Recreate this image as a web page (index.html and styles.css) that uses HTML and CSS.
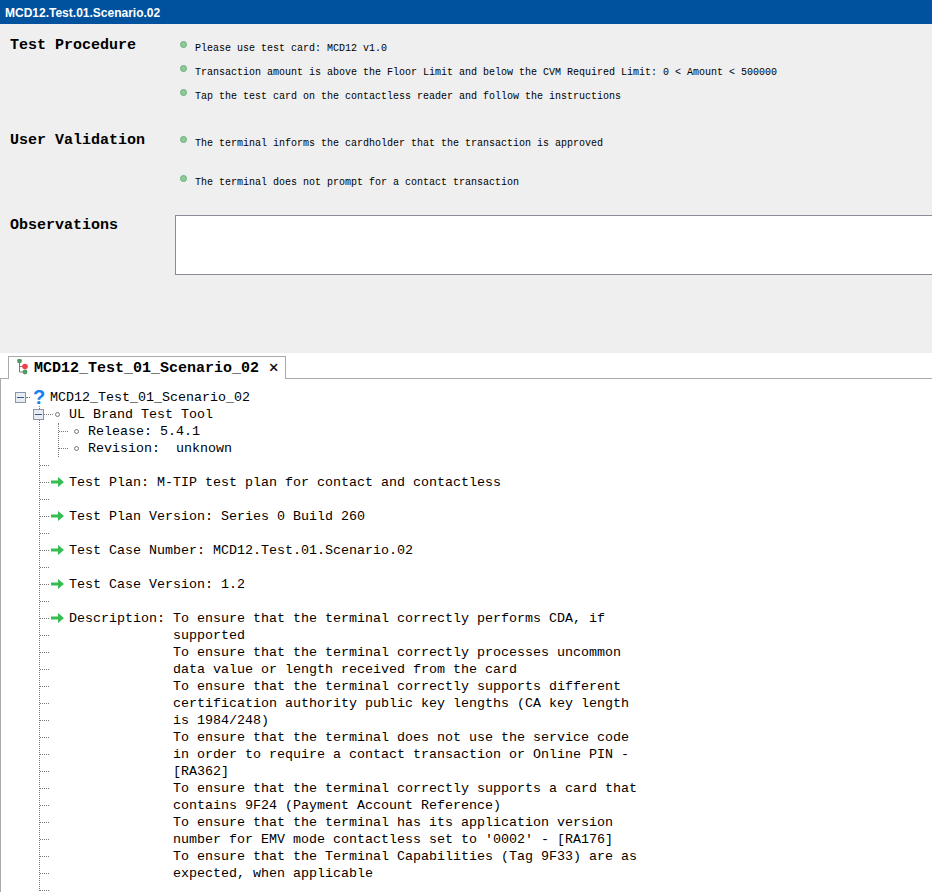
FILE: index.html
```html
<!DOCTYPE html>
<html lang="en">
<head>
  <meta charset="UTF-8">
  <title>MCD12.Test.01.Scenario.02</title>
  <link rel="stylesheet" href="styles.css">
</head>
<body>
  <div class="title-bar">MCD12.Test.01.Scenario.02</div>

  <div class="panel">
    <section class="section procedure">
      <h2 class="section-title">Test Procedure</h2>
      <ul class="steps">
        <li>Please use test card: MCD12 v1.0</li>
        <li>Transaction amount is above the Floor Limit and below the CVM Required Limit: 0 &lt; Amount &lt; 500000</li>
        <li>Tap the test card on the contactless reader and follow the instructions</li>
      </ul>
    </section>
    <section class="section validation">
      <h2 class="section-title">User Validation</h2>
      <ul class="steps steps-wide">
        <li>The terminal informs the cardholder that the transaction is approved</li>
        <li>The terminal does not prompt for a contact transaction</li>
      </ul>
    </section>
    <section class="section observations">
      <h2 class="section-title">Observations</h2>
      <textarea class="notes"></textarea>
    </section>
  </div>

  <div class="tab-strip">
    <div class="tab">
      <svg class="tab-icon" width="14" height="18" viewBox="0 0 14 18">
        <path d="M2.5 2V13H8M2.5 7.5H8" fill="none" stroke="#777" stroke-width="1"/>
        <circle cx="2.5" cy="2" r="2.4" fill="#4f9a5f"/>
        <circle cx="8" cy="7.5" r="2.8" fill="#f2404a"/>
        <circle cx="8" cy="13" r="2.4" fill="#4f9a5f"/>
      </svg>
      <span class="tab-label">MCD12_Test_01_Scenario_02</span>
      <span class="tab-close">×</span>
    </div>
  </div>

  <div class="tree">
    <div class="row root">
      <span class="toggle"></span>
      <span class="stub stub-root"></span>
      <span class="question">?</span>
      <span class="text">MCD12_Test_01_Scenario_02</span>
    </div>
    <div class="branch">
      <div class="row tool">
        <span class="toggle"></span>
        <span class="stub"></span>
        <span class="ring"></span>
        <span class="text">UL Brand Test Tool</span>
      </div>
      <div class="subbranch">
        <div class="row"><span class="stub"></span><span class="ring"></span><span class="text">Release: 5.4.1</span></div>
        <div class="row"><span class="stub"></span><span class="ring"></span><span class="text">Revision:  unknown</span></div>
      </div>
      <div class="row"><span class="stub"></span></div>

      <div class="row"><span class="stub"></span><svg class="arrow" width="13" height="10" viewBox="0 0 13 10"><path d="M0 3.5H7V0L13 5L7 10V6.5H0Z" fill="#35bd4f"/></svg><span class="text">Test Plan: M-TIP test plan for contact and contactless</span></div>
      <div class="row"><span class="stub"></span></div>

      <div class="row"><span class="stub"></span><svg class="arrow" width="13" height="10" viewBox="0 0 13 10"><path d="M0 3.5H7V0L13 5L7 10V6.5H0Z" fill="#35bd4f"/></svg><span class="text">Test Plan Version: Series 0 Build 260</span></div>
      <div class="row"><span class="stub"></span></div>

      <div class="row"><span class="stub"></span><svg class="arrow" width="13" height="10" viewBox="0 0 13 10"><path d="M0 3.5H7V0L13 5L7 10V6.5H0Z" fill="#35bd4f"/></svg><span class="text">Test Case Number: MCD12.Test.01.Scenario.02</span></div>
      <div class="row"><span class="stub"></span></div>

      <div class="row"><span class="stub"></span><svg class="arrow" width="13" height="10" viewBox="0 0 13 10"><path d="M0 3.5H7V0L13 5L7 10V6.5H0Z" fill="#35bd4f"/></svg><span class="text">Test Case Version: 1.2</span></div>
      <div class="row"><span class="stub"></span></div>

      <div class="row"><span class="stub"></span><svg class="arrow" width="13" height="10" viewBox="0 0 13 10"><path d="M0 3.5H7V0L13 5L7 10V6.5H0Z" fill="#35bd4f"/></svg><span class="text">Description: To ensure that the terminal correctly performs CDA, if</span></div>
      <div class="row"><span class="stub stub-line"></span><span class="text">supported</span></div>
      <div class="row"><span class="stub stub-line"></span><span class="text">To ensure that the terminal correctly processes uncommon</span></div>
      <div class="row"><span class="stub stub-line"></span><span class="text">data value or length received from the card</span></div>
      <div class="row"><span class="stub stub-line"></span><span class="text">To ensure that the terminal correctly supports different</span></div>
      <div class="row"><span class="stub stub-line"></span><span class="text">certification authority public key lengths (CA key length</span></div>
      <div class="row"><span class="stub stub-line"></span><span class="text">is 1984/248)</span></div>
      <div class="row"><span class="stub stub-line"></span><span class="text">To ensure that the terminal does not use the service code</span></div>
      <div class="row"><span class="stub stub-line"></span><span class="text">in order to require a contact transaction or Online PIN -</span></div>
      <div class="row"><span class="stub stub-line"></span><span class="text">[RA362]</span></div>
      <div class="row"><span class="stub stub-line"></span><span class="text">To ensure that the terminal correctly supports a card that</span></div>
      <div class="row"><span class="stub stub-line"></span><span class="text">contains 9F24 (Payment Account Reference)</span></div>
      <div class="row"><span class="stub stub-line"></span><span class="text">To ensure that the terminal has its application version</span></div>
      <div class="row"><span class="stub stub-line"></span><span class="text">number for EMV mode contactless set to '0002' - [RA176]</span></div>
      <div class="row"><span class="stub stub-line"></span><span class="text">To ensure that the Terminal Capabilities (Tag 9F33) are as</span></div>
      <div class="row"><span class="stub stub-line"></span><span class="text">expected, when applicable</span></div>
      <div class="row"><span class="stub"></span></div>
    </div>
  </div>
</body>
</html>
```

FILE: styles.css
```css
html, body {
  height: 892px;
  margin: 0;
  overflow: hidden;
  background-color: #fff;
}

body {
  font-family: "Liberation Mono", monospace;
  color: #000;
}

.title-bar {
  height: 24px;
  padding-left: 5px;
  background-color: #00529f;
  color: #fff;
  font: bold 12px/26px "Liberation Sans", sans-serif;
}

.panel {
  height: 329px;
  background-color: #efefef;
  overflow: hidden;
}

.section {
  display: flex;
}

.section-title {
  flex: none;
  width: 165px;
  margin: 1px 0 0 10px;
  font-size: 15px;
  font-weight: bold;
  line-height: 17px;
}

.procedure {
  padding-top: 12px;
  height: 95px;
}

.validation {
  height: 84px;
}

.observations {
  height: 60px;
}

.observations .section-title {
  margin-top: 2px;
}

.steps {
  margin: 0;
  padding: 0;
  list-style: none;
  font-size: 10px;
}

.steps li {
  position: relative;
  height: 24px;
  padding-left: 20px;
  line-height: 25px;
  white-space: nowrap;
}

.steps li::before {
  content: "";
  position: absolute;
  left: 5px;
  top: 5px;
  box-sizing: border-box;
  width: 7px;
  height: 7px;
  border: 1px solid #6fae7b;
  border-radius: 50%;
  background-color: #8ccb96;
}

.steps-wide li {
  height: 39px;
}

.notes {
  display: block;
  flex: none;
  box-sizing: border-box;
  width: 800px;
  height: 60px;
  margin: 0;
  padding: 2px;
  border: 1px solid #8a8a99;
  background-color: #fff;
  resize: none;
}

.tab-strip {
  display: flex;
  box-sizing: border-box;
  height: 26px;
  padding: 3px 0 0 8px;
  border-bottom: 1px solid #aaa;
}

.tab {
  display: flex;
  align-items: center;
  box-sizing: border-box;
  width: 278px;
  height: 23px;
  padding-left: 8px;
  border: 1px solid #aaa;
  border-bottom: none;
  background-color: #fff;
}

.tab-icon {
  flex: none;
}

.tab-label {
  margin-left: 3px;
  font-size: 15px;
  font-weight: bold;
  white-space: pre;
}

.tab-close {
  margin-left: 10px;
  font: 16px "Liberation Sans", sans-serif;
  -webkit-text-stroke: 0.3px #000;
}

.tree {
  box-sizing: border-box;
  height: 513px;
  padding: 10px 0 0 14px;
  border-left: 1px solid #aaa;
  overflow: hidden;
  font-size: 13.33px;
}

.row {
  display: flex;
  align-items: center;
  height: 17px;
  white-space: pre;
}

.toggle {
  position: relative;
  flex: none;
  box-sizing: border-box;
  width: 11px;
  height: 11px;
  border: 1px solid #8a96a8;
  background-color: #e8ecf2;
}

.toggle::after {
  content: "";
  position: absolute;
  left: 1px;
  right: 1px;
  top: 4px;
  height: 1px;
  background-color: #2c5a96;
}

.stub {
  flex: none;
  width: 9px;
  height: 0;
  border-top: 1px dotted #777;
}

.stub-root {
  width: 4px;
  margin-right: 3px;
}

.stub-line {
  margin-right: 124px;
}

.question {
  flex: none;
  width: 17px;
  color: #1a7cf0;
  font: bold 20px/17px "Liberation Sans", sans-serif;
}

.branch {
  margin-left: 24px;
  border-left: 1px dotted #777;
}

.tool {
  margin-left: -7px;
}

.ring {
  flex: none;
  box-sizing: border-box;
  width: 5px;
  height: 5px;
  margin: 0 9px 0 6px;
  border: 1px solid #777;
  border-radius: 50%;
}

.tool .ring {
  margin-left: 2px;
}

.subbranch {
  margin-left: 18px;
  border-left: 1px dotted #777;
}

.arrow {
  flex: none;
  margin: 0 5px 2px 2px;
}
```
